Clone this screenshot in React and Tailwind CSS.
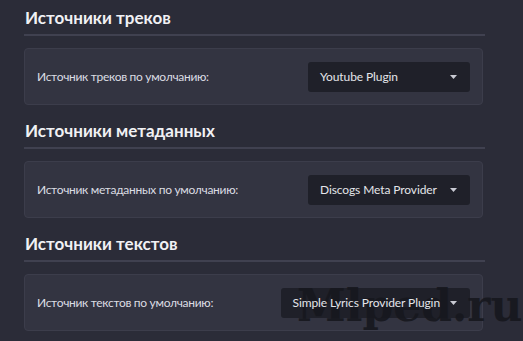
import React from "react";

const sections = [
  {
    title: "Источники треков",
    label: "Источник треков по умолчанию:",
    value: "Youtube Plugin",
  },
  {
    title: "Источники метаданных",
    label: "Источник метаданных по умолчанию:",
    value: "Discogs Meta Provider",
  },
  {
    title: "Источники текстов",
    label: "Источник текстов по умолчанию:",
    value: "Simple Lyrics Provider Plugin",
  },
];

function Caret() {
  return (
    <svg width="7" height="4" viewBox="0 0 7 4" className="shrink-0">
      <path d="M0 0h7L3.5 4z" fill="#c9cad3" />
    </svg>
  );
}

export default function App() {
  return (
    <div
      className="relative w-[523px] h-[341px] overflow-hidden bg-[#2b2c38] pl-[24px] pr-[38px] pt-[6px]"
      style={{ fontFamily: "Lato, 'Noto Sans', sans-serif" }}
    >
      <div className="flex flex-col gap-[14px]">
        {sections.map((s) => (
          <section key={s.title}>
            {/* Heading */}
            <h2 className="text-[17px] leading-[24px] font-bold text-[#f1f1f4] pl-[1px] pb-[4px] border-b-2 border-[#404150]">
              {s.title}
            </h2>

            {/* Card */}
            <div className="mt-[12px] mr-[2px] h-[57px] flex items-center justify-between rounded-[4px] border border-[#3c3d4b] bg-[#333441] pl-[12px] pr-[12px]">
              <span className="text-[12px] tracking-[-0.3px] text-[#dcdde3]">{s.label}</span>
              <div className="relative min-w-[162px] h-[30px] flex items-center justify-between gap-[10px] rounded-[3px] bg-[#1f2029] pl-[12px] pr-[13px]">
                <span className="relative z-10 text-[12px] tracking-[-0.1px] text-[#e4e5ea]">{s.value}</span>
                <span className="relative z-10">
                  <Caret />
                </span>
              </div>
            </div>
          </section>
        ))}
      </div>

      {/* Watermark */}
      <div
        className="absolute left-[297px] top-[284px] z-[5] pointer-events-none text-[44px] leading-[44px] font-bold text-[#17181e] opacity-90"
        style={{ fontFamily: "'DejaVu Serif', serif" }}
      >
        Mlped.ru
      </div>
    </div>
  );
}
